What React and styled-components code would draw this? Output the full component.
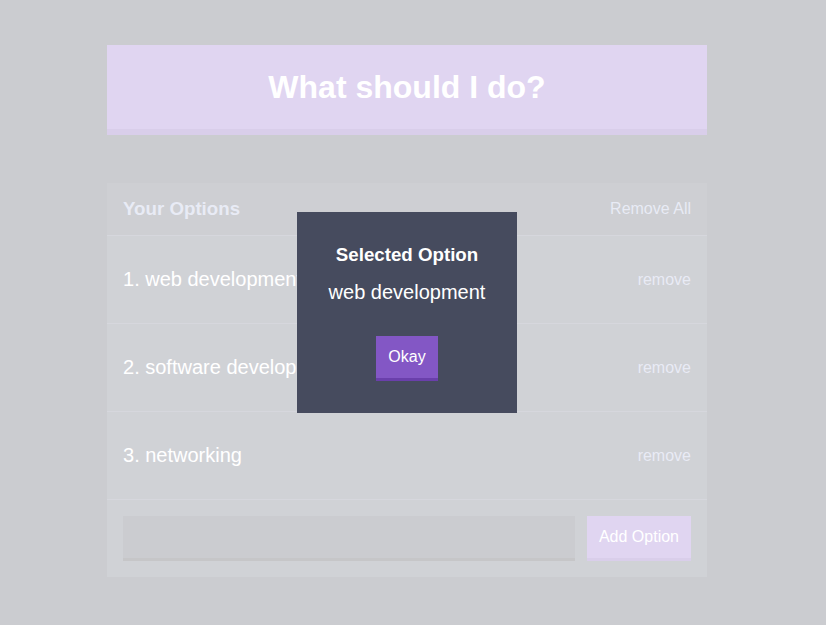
import { styled, createGlobalStyle } from "styled-components";

const colors = {
  darkBlue: "#333745",
  blue: "#3c4251",
  lightBlue: "#464b5e",
  purple: "#8357c5",
  purpleDark: "#6a3fab",
  offWhite: "#a5afd7",
  optionBorder: "#5b6179",
  inputBorder: "#1d1f27",
};

const GlobalStyle = createGlobalStyle`
  * {
    box-sizing: border-box;
  }

  html {
    font-size: 62.5%;
  }

  body {
    margin: 0;
    background: ${colors.darkBlue};
    font-family: "Liberation Sans", Arial, Helvetica, sans-serif;
    font-size: 1.6rem;
    line-height: normal;
    color: white;
  }

  button {
    cursor: pointer;
    font-family: inherit;
  }
`;

const Page = styled.div`
  padding: 45px 12px 0 0;
`;

const Container = styled.div`
  max-width: 600px;
  margin: 0 auto;
`;

const BigButton = styled.button`
  display: block;
  width: 100%;
  background: ${colors.purple};
  border: none;
  border-bottom: 6px solid ${colors.purpleDark};
  color: white;
  font-weight: bold;
  font-size: 3.2rem;
  line-height: 36px;
  padding: 2.4rem;
  margin-bottom: 4.8rem;
`;

const Widget = styled.div`
  background: ${colors.lightBlue};
  margin-bottom: 4.8rem;
`;

const WidgetHeader = styled.div`
  background: ${colors.blue};
  color: ${colors.offWhite};
  display: flex;
  justify-content: space-between;
  align-items: center;
  padding: 1.6rem;
  border-bottom: 1px solid ${colors.optionBorder};
`;

const Title = styled.h3`
  margin: ${(props) => (props.modal ? "0 0 1.6rem 0" : "0")};
  font-size: 1.872rem;
  line-height: ${(props) => (props.modal ? "21px" : "20px")};
`;

const LinkButton = styled.button`
  background: none;
  border: none;
  color: ${colors.offWhite};
  font-size: 1.6rem;
  padding: 0;
`;

const Option = styled.div`
  display: flex;
  justify-content: space-between;
  align-items: center;
  padding: 3.2rem 1.6rem;
  border-bottom: 1px solid ${colors.optionBorder};
`;

const OptionText = styled.p`
  margin: 0;
  color: white;
  font-size: 2rem;
  font-weight: 500;
  word-break: break-all;
`;

const AddOptionForm = styled.form`
  display: flex;
  padding: 1.6rem;
`;

const AddOptionInput = styled.input`
  flex-grow: 1;
  background: ${colors.darkBlue};
  border: none;
  border-bottom: 3px solid ${colors.inputBorder};
  color: ${colors.offWhite};
  padding: 1.2rem;
  margin: 0 1.2rem 0 0;
  font-size: 1.6rem;
  font-family: inherit;
  outline: none;
`;

const Button = styled.button`
  background: ${colors.purple};
  border: none;
  border-bottom: 3px solid ${colors.purpleDark};
  color: white;
  font-size: 1.6rem;
  font-weight: 500;
  padding: 1.2rem;
  line-height: normal;
`;

const Overlay = styled.div`
  position: fixed;
  inset: 0;
  background: rgba(255, 255, 255, 0.75);
  display: flex;
  align-items: center;
  justify-content: center;
  padding-right: 12px;
`;

const Modal = styled.div`
  background: ${colors.lightBlue};
  color: white;
  max-width: 30rem;
  padding: 3.2rem;
  text-align: center;
`;

const ModalBody = styled.p`
  margin: 0 0 3.2rem 0;
  font-size: 2rem;
  font-weight: 300;
  word-break: break-all;
`;

const options = ["web development", "software development", "networking"];

export default function App() {
  return (
    <>
      <GlobalStyle />
      <Page>
        <Container>
          <BigButton>What should I do?</BigButton>
          <Widget>
            <WidgetHeader>
              <Title>Your Options</Title>
              <LinkButton>Remove All</LinkButton>
            </WidgetHeader>
            {options.map((option, index) => (
              <Option key={option}>
                <OptionText>
                  {index + 1}. {option}
                </OptionText>
                <LinkButton>remove</LinkButton>
              </Option>
            ))}
            <AddOptionForm onSubmit={(event) => event.preventDefault()}>
              <AddOptionInput type="text" name="option" />
              <Button>Add Option</Button>
            </AddOptionForm>
          </Widget>
        </Container>
      </Page>
      <Overlay>
        <Modal>
          <Title modal>Selected Option</Title>
          <ModalBody>web development</ModalBody>
          <Button>Okay</Button>
        </Modal>
      </Overlay>
    </>
  );
}
